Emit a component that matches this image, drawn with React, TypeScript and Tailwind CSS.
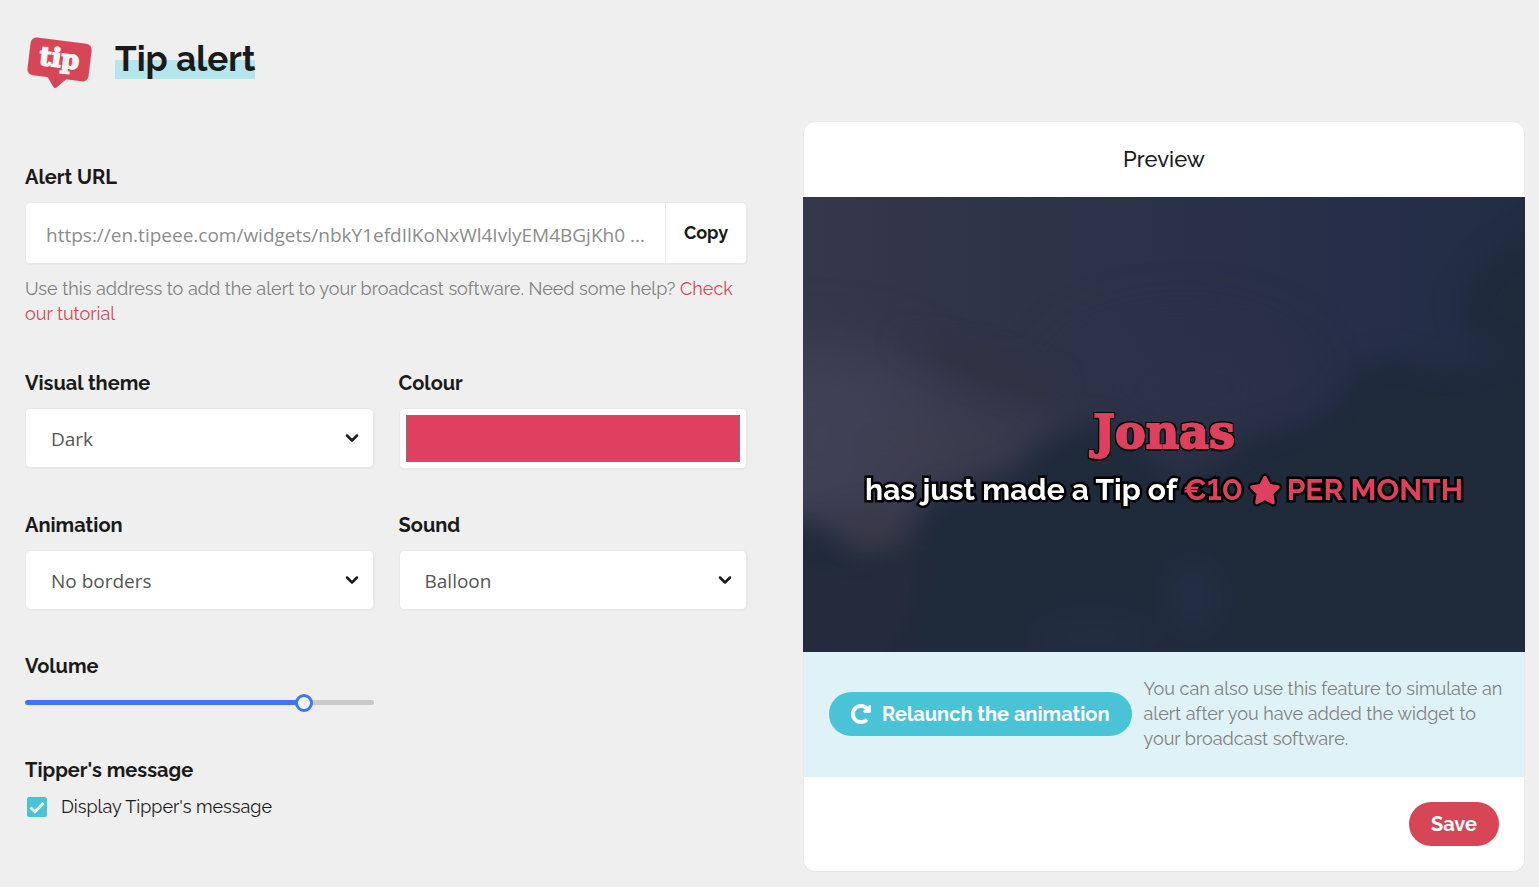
import React, { useState } from "react";
import { FaStar, FaRedoAlt } from "react-icons/fa";

const labelClass = "block text-xl leading-[25px] font-bold text-[#1a1a1a]";
const boxClass = "rounded-[5px] border border-[#e8e8e8] bg-white shadow-[1px_1px_0_#e8e8e8]";

function TipLogo() {
  return (
    <svg width="66" height="54" viewBox="0 0 66 54" className="overflow-visible" role="img" aria-label="tip">
      <g transform="translate(1.500 -1) rotate(7 33 25)">
        <rect x="2" y="3.500" width="61.500" height="38" rx="6" fill="#d74657" />
        <path d="M22 40 L43 40 L33.500 50.500 Q31.500 52.500 29.800 50.300 Z" fill="#d74657" />
        <text x="32.500" y="30" textAnchor="middle" fontSize="26" stroke="#f5f3f3" strokeWidth="1.600" className="font-['DejaVu_Serif',serif] font-bold" fill="#f5f3f3">tip</text>
      </g>
    </svg>
  );
}

function Chevron() {
  return (
    <svg className="pointer-events-none absolute top-1/2 right-[15px] -translate-y-1/2" width="14" height="10" viewBox="0 0 14 10" aria-hidden="true">
      <path d="M2 2.500 L7 7.500 L12 2.500" fill="none" stroke="#1a1a1a" strokeWidth="2.500" strokeLinecap="round" strokeLinejoin="round" />
    </svg>
  );
}

function SelectField({ id, label, options }: { id: string; label: string; options: string[] }) {
  return (
    <div>
      <label htmlFor={id} className={labelClass}>{label}</label>
      <div className="relative mt-3">
        <select id={id} className={`block h-15 w-full appearance-none px-[25px] pt-0.5 font-['Open_Sans',sans-serif] text-[19px] text-[#555] ${boxClass}`}>
          {options.map((o) => <option key={o}>{o}</option>)}
        </select>
        <Chevron />
      </div>
    </div>
  );
}

function NightSky() {
  return (
    <svg className="absolute inset-0 h-full w-full" viewBox="0 0 722 455" preserveAspectRatio="none" aria-hidden="true">
      <defs>
        <linearGradient id="sky" x1="0" y1="0" x2="1" y2="0">
          <stop offset="0" stopColor="#35374b" />
          <stop offset="0.500" stopColor="#2b3147" />
          <stop offset="0.800" stopColor="#262e4a" />
          <stop offset="1" stopColor="#222d42" />
        </linearGradient>
        <filter id="soft" x="-20%" y="-20%" width="140%" height="140%" colorInterpolationFilters="sRGB"><feGaussianBlur stdDeviation="13" /></filter>
        <filter id="mist" x="-50%" y="-50%" width="200%" height="200%" colorInterpolationFilters="sRGB"><feGaussianBlur stdDeviation="30" /></filter>
      </defs>
      <rect width="722" height="455" fill="url(#sky)" />
      <g filter="url(#mist)">
        <ellipse cx="20" cy="240" rx="130" ry="90" fill="#42435a" opacity="0.800" />
        <ellipse cx="150" cy="250" rx="110" ry="50" fill="#403d50" opacity="0.700" />
        <ellipse cx="380" cy="190" rx="120" ry="60" fill="#2f3148" opacity="0.500" />
      </g>
      <g filter="url(#soft)">
        <path d="M90 140 L180 155 L260 185 L240 205 L170 180 Z" fill="#30313f" opacity="0.800" />
        <path d="M-40 330 L10 325 L60 360 L110 335 L130 300 L210 275 L240 245 L290 225 L330 240 L370 285 L410 270 L450 240 L500 225 L530 210 L550 175 L590 158 L640 175 L700 160 L780 150 L780 500 L-40 500 Z" fill="#1f2a3b" />
        <path d="M760 20 L690 60 L655 105 L670 140 L760 170 Z" fill="#1f2a3b" />
        <path d="M-40 350 L60 380 L120 345 L110 420 L60 500 L-40 500 Z" fill="#242b3c" />
        <ellipse cx="70" cy="335" rx="36" ry="20" fill="#3b3948" />
        <ellipse cx="390" cy="400" rx="26" ry="34" fill="#252f46" opacity="0.800" />
        <ellipse cx="290" cy="440" rx="60" ry="20" fill="#252f44" opacity="0.700" />
      </g>
    </svg>
  );
}

export default function App() {
  const [volume, setVolume] = useState(80);
  const [display, setDisplay] = useState(true);
  const [colour, setColour] = useState("#df405f");

  return (
    <main className="min-h-screen bg-[#efefef] pr-[14px] pb-[15px] pl-[25px] font-[Raleway,Lato,sans-serif] text-[#1a1a1a] lining-nums">
      <header className="flex h-[121px] items-start gap-6 pt-[38px]">
        <TipLogo />
        <h1 className="bg-linear-to-b from-transparent from-54% to-[#b4e6ec] to-54% text-[35px] leading-[41px] font-bold">Tip alert</h1>
      </header>

      <div className="grid grid-cols-2 items-start gap-14">
        <form className="pt-11">
          <label htmlFor="url" className={labelClass}>Alert URL</label>
          <div className={`mt-3 flex h-[62px] ${boxClass}`}>
            <input id="url" readOnly value="https://en.tipeee.com/widgets/nbkY1efdIlKoNxWl4IvlyEM4BGjKh0 ..." className="min-w-0 flex-1 bg-transparent pt-1 pl-5 font-['Open_Sans',sans-serif] text-[19px] text-[#8c8c8c]" />
            <button type="button" className="w-[81px] border-l border-[#e8e8e8] text-lg font-bold">Copy</button>
          </div>
          <p className="mt-3 text-lg leading-[25px] text-[#808080]">
            Use this address to add the alert to your broadcast software. Need some help? <a href="#tutorial" className="text-[#d74657]">Check our tutorial</a>
          </p>

          <div className="mt-[45px] grid grid-cols-2 gap-x-[25px] gap-y-11">
            <SelectField id="theme" label="Visual theme" options={["Dark", "Light"]} />
            <div>
              <label htmlFor="colour" className={labelClass}>Colour</label>
              <input id="colour" type="color" value={colour} onChange={(e) => setColour(e.target.value)} className={`mt-3 block h-[61px] w-full p-1.5 [&::-webkit-color-swatch]:rounded-none [&::-webkit-color-swatch]:border-[#777] [&::-webkit-color-swatch-wrapper]:p-0 ${boxClass}`} />
            </div>
            <SelectField id="animation" label="Animation" options={["No borders", "Borders"]} />
            <SelectField id="sound" label="Sound" options={["Balloon", "None"]} />
            <div>
              <label htmlFor="volume" className={labelClass}>Volume</label>
              <div className="mt-[21px] flex h-[5px] items-center rounded-full" style={{ background: `linear-gradient(to right, #4073ff ${volume}%, #c9c9c9 ${volume}%)` }}>
                <input id="volume" type="range" min={0} max={100} value={volume} onChange={(e) => setVolume(Number(e.target.value))} className="-mx-[9px] h-[18px] flex-none basis-[calc(100%+18px)] appearance-none bg-transparent [&::-webkit-slider-thumb]:size-[18px] [&::-webkit-slider-thumb]:appearance-none [&::-webkit-slider-thumb]:rounded-full [&::-webkit-slider-thumb]:border-3 [&::-webkit-slider-thumb]:border-[#4073ff] [&::-webkit-slider-thumb]:bg-white" />
              </div>
            </div>
          </div>

          <fieldset className="mt-[53px]">
            <legend className={labelClass}>Tipper's message</legend>
            <label className="mt-[11px] flex items-center gap-[14px] pl-0.5 text-lg leading-[25px]">
              <span className="relative flex size-5">
                <input type="checkbox" checked={display} onChange={(e) => setDisplay(e.target.checked)} className="size-5 appearance-none rounded-xs border border-[#4bc3d6] checked:bg-[#4bc3d6]" />
                {display && (
                  <svg className="pointer-events-none absolute inset-0" width="20" height="20" viewBox="0 0 20 20" aria-hidden="true">
                    <path d="M3.500 10.500 L8 14.800 L16.500 6" fill="none" stroke="#f5f5f5" strokeWidth="2.800" />
                  </svg>
                )}
              </span>
              Display Tipper's message
            </label>
          </fieldset>
        </form>

        <section className="rounded-xl border border-[#e8e8e8] bg-white">
          <h2 className="py-[25px] text-center text-[22px] leading-[25px] font-medium">Preview</h2>
          <div className="relative -mx-px h-[455px] overflow-hidden">
            <NightSky />
            <div className="relative pt-[206px] text-center font-bold">
              <p className="font-['DejaVu_Serif',serif] text-[46px] leading-[58px] text-[#df405f] [-webkit-text-stroke:2px_#df405f] [text-shadow:2px_2px_0_#000,-2px_-2px_0_#000,2px_-2px_0_#000,-2px_2px_0_#000,0_3px_0_#000,2px_0_0_#000,-2px_0_0_#000,0_-2px_0_#000]">Jonas</p>
              <p className="flex items-center justify-center gap-1.5 text-3xl leading-[58px] whitespace-nowrap text-white [-webkit-text-stroke:5px_#000] [paint-order:stroke_fill]">
                has just made a Tip of
                <span className="text-[#df405f]">€10</span>
                <FaStar className="size-8 overflow-visible stroke-black text-[#df405f] [paint-order:stroke] [stroke-width:80px]" aria-hidden="true" />
                <span className="text-[#df405f]">PER MONTH</span>
              </p>
            </div>
          </div>
          <div className="flex items-center gap-3 bg-[#dff2f8] pt-6 pr-4 pb-[26px] pl-[25px]">
            <button type="button" className="flex h-11 shrink-0 items-center gap-[11px] rounded-full bg-[#4bc3d6] px-[22px] text-xl font-bold text-white">
              <FaRedoAlt className="size-5 stroke-current [stroke-width:20px]" aria-hidden="true" />
              Relaunch the animation
            </button>
            <p className="text-lg leading-[25px] text-[#808080]">You can also use this feature to simulate an alert after you have added the widget to your broadcast software.</p>
          </div>
          <div className="flex justify-end p-[25px]">
            <button type="button" className="h-11 w-[90px] rounded-full bg-[#d74657] text-xl font-bold text-white">Save</button>
          </div>
        </section>
      </div>
    </main>
  );
}
